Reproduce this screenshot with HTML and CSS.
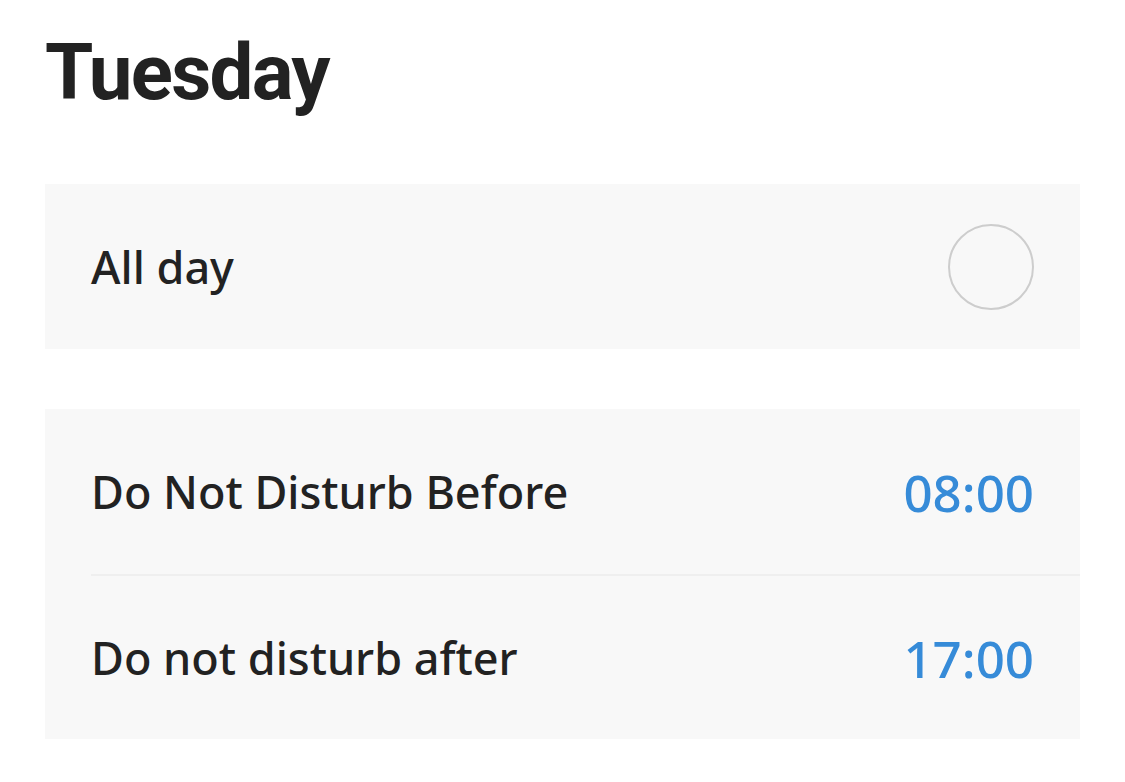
FILE: index.html
```html
<!DOCTYPE html>
<html lang="en">
<head>
  <meta charset="UTF-8">
  <meta name="viewport" content="width=device-width, initial-scale=1">
  <title>Tuesday</title>
  <link rel="stylesheet" href="styles.css">
</head>
<body>
  <h1>Tuesday</h1>

  <div class="group">
    <div class="row">
      <span class="label">All day</span>
      <span class="toggle"></span>
    </div>
  </div>

  <div class="group">
    <div class="row">
      <span class="label">Do Not Disturb Before</span>
      <span class="time">08:00</span>
    </div>
    <div class="row">
      <span class="label">Do not disturb after</span>
      <span class="time">17:00</span>
    </div>
  </div>
</body>
</html>
```

FILE: styles.css
```css
body {
  margin: 0;
  padding: 0 45px;
  font-family: 'Noto Sans', 'Open Sans', sans-serif;
  color: #222;
  background: white;
}

h1 {
  font-family: Roboto, 'Noto Sans', sans-serif;
  font-size: 78px;
  font-weight: 700;
  letter-spacing: -1.7px;
  margin: 18px 0 0 0;
  line-height: 110px;
  height: 166px;
}

.group {
  background-color: #f8f8f8;
  margin-bottom: 60px;
}

.row {
  display: flex;
  align-items: center;
  justify-content: space-between;
  height: 165px;
  margin-left: 46px;
  padding-right: 46px;
  font-size: 45px;
  font-weight: 500;
}

.row + .row {
  border-top: 2px solid #efefef;
  height: 163px;
}

.toggle {
  width: 82px;
  height: 82px;
  border: 2px solid #cdcdcd;
  border-radius: 50%;
}

.time {
  color: #368bd8;
  font-size: 51px;
  font-weight: 500;
}
```
